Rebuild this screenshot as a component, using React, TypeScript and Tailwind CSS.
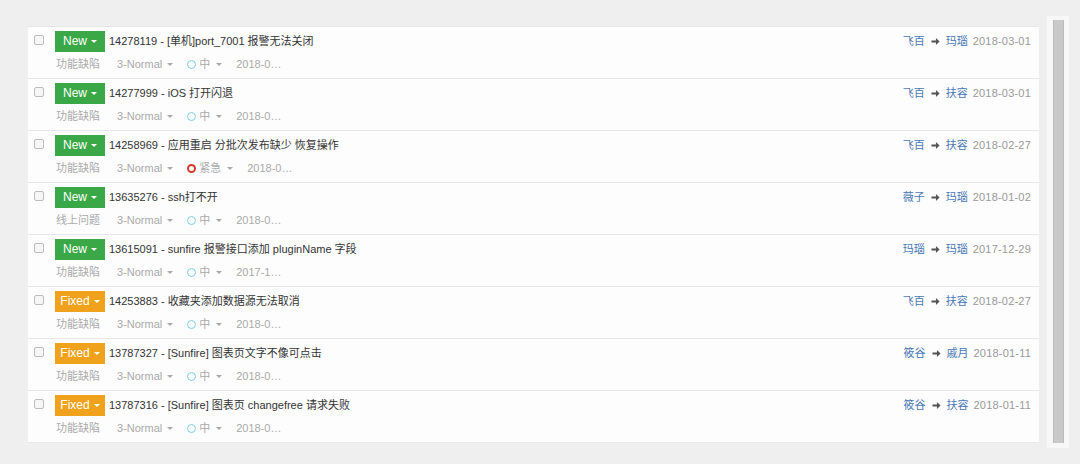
import React from "react";

type Row = {
  status: "New" | "Fixed";
  title: string;
  kind: string;
  pri: "中" | "紧急";
  date2: string;
  from: string;
  to: string;
  date: string;
};

const rows: Row[] = [
  { status: "New", title: "14278119 - [单机]port_7001 报警无法关闭", kind: "功能缺陷", pri: "中", date2: "2018-0…", from: "飞百", to: "玛瑙", date: "2018-03-01" },
  { status: "New", title: "14277999 - iOS 打开闪退", kind: "功能缺陷", pri: "中", date2: "2018-0…", from: "飞百", to: "扶容", date: "2018-03-01" },
  { status: "New", title: "14258969 - 应用重启 分批次发布缺少 恢复操作", kind: "功能缺陷", pri: "紧急", date2: "2018-0…", from: "飞百", to: "扶容", date: "2018-02-27" },
  { status: "New", title: "13635276 - ssh打不开", kind: "线上问题", pri: "中", date2: "2018-0…", from: "薇子", to: "玛瑙", date: "2018-01-02" },
  { status: "New", title: "13615091 - sunfire 报警接口添加 pluginName 字段", kind: "功能缺陷", pri: "中", date2: "2017-1…", from: "玛瑙", to: "玛瑙", date: "2017-12-29" },
  { status: "Fixed", title: "14253883 - 收藏夹添加数据源无法取消", kind: "功能缺陷", pri: "中", date2: "2018-0…", from: "飞百", to: "扶容", date: "2018-02-27" },
  { status: "Fixed", title: "13787327 - [Sunfire] 图表页文字不像可点击", kind: "功能缺陷", pri: "中", date2: "2018-0…", from: "筱谷", to: "戚月", date: "2018-01-11" },
  { status: "Fixed", title: "13787316 - [Sunfire] 图表页 changefree 请求失败", kind: "功能缺陷", pri: "中", date2: "2018-0…", from: "筱谷", to: "扶容", date: "2018-01-11" },
];

function Caret({ white }: { white?: boolean }) {
  return (
    <span
      className={
        "inline-block w-0 h-0 border-l-[3px] border-r-[3px] border-t-[3px] border-l-transparent border-r-transparent " +
        (white ? "border-t-white" : "border-t-[#aaa]")
      }
    />
  );
}

function Arrow() {
  return (
    <svg width="9" height="9" viewBox="0 0 10 10" className="mx-[6px]">
      <path d="M0.5 4 H5.5 V1.2 L9.5 5 L5.5 8.8 V6 H0.5 Z" fill="#555" />
    </svg>
  );
}

function RowItem({ r }: { r: Row }) {
  const badge = r.status === "New" ? "bg-[#3aa846]" : "bg-[#f0a21c]";
  return (
    <div className="flex flex-col h-[52px] border-b border-[#e8e8e8]">
      <div className="flex items-center h-[22px] mt-[3px] pl-[6px] pr-[8px]">
        <span className="w-[10px] h-[10px] border border-[#bdbdbd] rounded-[2px] bg-[#f6f6f6] self-start mt-[5px]" />
        <span className={"ml-[11px] w-[50px] h-[21px] flex items-center justify-center gap-[4px] text-white text-[12px] " + badge}>
          {r.status}
          <Caret white />
        </span>
        <span className="ml-[4px] text-[11px] text-[#333]">{r.title}</span>
        <div className="ml-auto flex items-center text-[11px]">
          <span className="text-[#4a78b5]">{r.from}</span>
          <Arrow />
          <span className="text-[#4a78b5]">{r.to}</span>
          <span className="ml-[5px] text-[#999] tracking-[0.2px]">{r.date}</span>
        </div>
      </div>
      <div className="flex items-center h-[16px] mt-[4px] pl-[28px] text-[11px] text-[#aaa]">
        <span className="w-[61px]">{r.kind}</span>
        <span>3-Normal</span>
        <span className="ml-[5px] flex"><Caret /></span>
        <span
          className={
            "ml-[14px] w-[9px] h-[9px] rounded-full " +
            (r.pri === "紧急" ? "border-[2px] border-[#d33a30]" : "border border-[#7ccde6]")
          }
        />
        <span className="ml-[3px]">{r.pri}</span>
        <span className="ml-[6px] flex"><Caret /></span>
        <span className="ml-[14px]">{r.date2}</span>
      </div>
    </div>
  );
}

export default function App() {
  return (
    <div className="w-[1080px] h-[464px] bg-[#efefef] font-['Liberation_Sans','Noto_Sans_CJK_SC',sans-serif] flex items-start">
      <div className="ml-[28px] mt-[26px] w-[1011px] bg-[#fdfdfd] border-t border-[#e6e6e6]">
        {rows.map((r, i) => (
          <RowItem key={i} r={r} />
        ))}
      </div>
      <div className="ml-[8px] mt-[16px] w-[22px] h-[432px] bg-[#f7f7f7] flex justify-center pt-[4px]">
        <div className="w-[11px] h-[423px] bg-[#c9c9c9] border-l border-r border-[#bcbcbc]" />
      </div>
    </div>
  );
}
